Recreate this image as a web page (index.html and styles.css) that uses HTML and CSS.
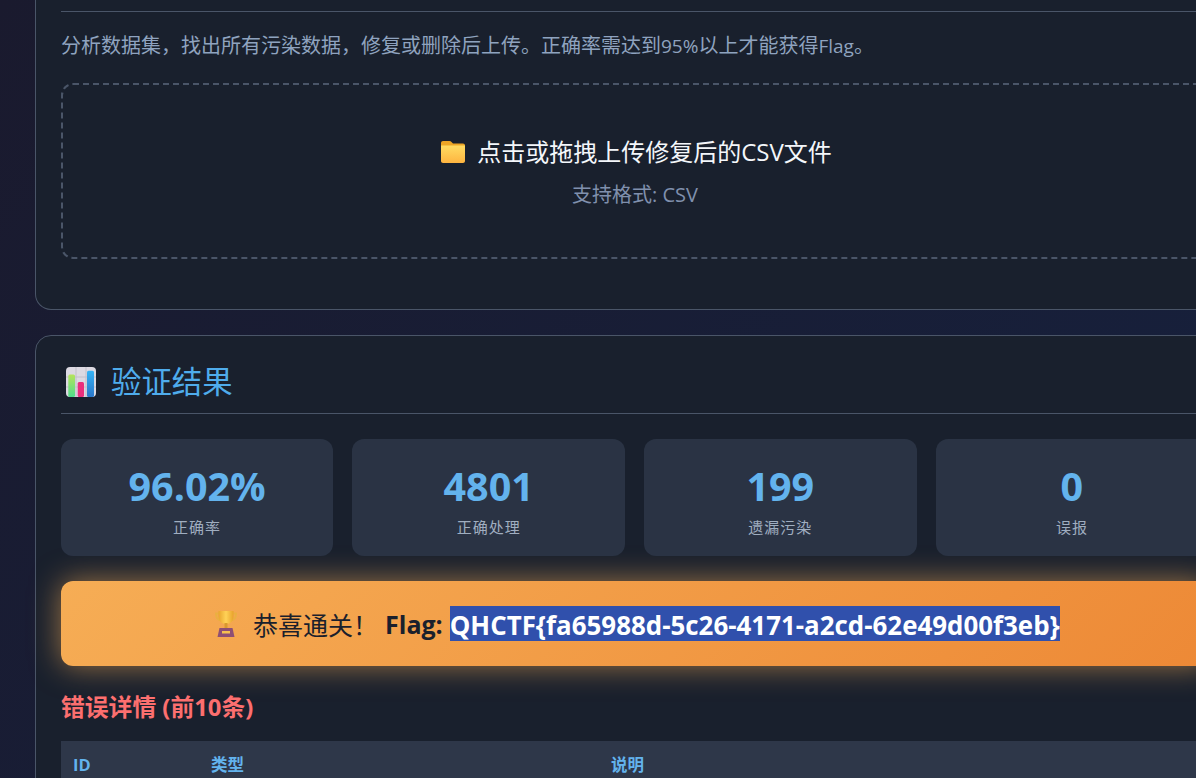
FILE: index.html
```html
<!DOCTYPE html>
<html lang="zh-CN">
<head>
<meta charset="utf-8">
<title>数据集验证</title>
<link rel="stylesheet" href="styles.css">
</head>
<body>
<main class="page">
  <section class="card card-clipped">
    <div class="rule-stub"></div>
    <p class="desc">分析数据集，找出所有污染数据，修复或删除后上传。正确率需达到<span class="latin">95%</span>以上才能获得<span class="latin">Flag</span>。</p>
    <div class="dropzone">
      <div class="drop-main">
        <svg class="icon-folder" viewBox="0 0 24 22" aria-hidden="true">
          <defs><linearGradient id="fold" x1="0" y1="0" x2="0" y2="1"><stop offset="0" stop-color="#ffdc62"/><stop offset="1" stop-color="#feb440"/></linearGradient></defs>
          <path d="M2 0h6.500c.8 0 1.400.3 2 .9L12 2.500h10c1.100 0 2 .9 2 2V8H0V2C0 .9.9 0 2 0z" fill="#eda526"/>
          <path d="M0 4.500h24V20c0 1.100-.9 2-2 2H2c-1.100 0-2-.9-2-2z" fill="url(#fold)"/>
        </svg>
        <span>点击或拖拽上传修复后的CSV文件</span>
      </div>
      <div class="drop-sub">支持格式: CSV</div>
    </div>
  </section>

  <section class="card">
    <h2 class="title">
      <svg class="icon-chart" viewBox="0 0 30 30" aria-hidden="true">
        <defs>
          <linearGradient id="barG" x1="0" y1="0" x2="0" y2="1"><stop offset="0" stop-color="#b5e35b"/><stop offset="1" stop-color="#4fdd8c"/></linearGradient>
          <linearGradient id="barB" x1="0" y1="0" x2="0" y2="1"><stop offset="0" stop-color="#35b4f6"/><stop offset="1" stop-color="#2a76c9"/></linearGradient>
        </defs>
        <rect width="30" height="30" rx="4" fill="#dcd9e2"/>
        <path d="M10 0v30M20 0v30M0 10h30M0 20h30" stroke="#c2bfca" stroke-width="1"/>
        <rect x="2.300" y="7.600" width="6.700" height="22.400" rx="1.500" fill="url(#barG)"/>
        <rect x="11.700" y="15" width="6.300" height="15" rx="1.500" fill="#ea2f7c"/>
        <rect x="21" y="3.700" width="7" height="26.300" rx="1.500" fill="url(#barB)"/>
      </svg>
      <span>验证结果</span>
    </h2>

    <div class="stats">
      <div class="stat"><div class="stat-value">96.02%</div><div class="stat-label">正确率</div></div>
      <div class="stat"><div class="stat-value">4801</div><div class="stat-label">正确处理</div></div>
      <div class="stat"><div class="stat-value">199</div><div class="stat-label">遗漏污染</div></div>
      <div class="stat"><div class="stat-value">0</div><div class="stat-label">误报</div></div>
    </div>

    <div class="banner">
      <svg class="icon-trophy" viewBox="0 0 22 26" aria-hidden="true">
        <defs><linearGradient id="cup" x1="0" y1="0" x2="1" y2="0"><stop offset="0" stop-color="#e9a52e"/><stop offset=".5" stop-color="#ffd257"/><stop offset="1" stop-color="#e8a22c"/></linearGradient></defs>
        <path d="M4 2.500H1C1 7 2.500 9 6 9.500M18 2.500h3C21 7 19.500 9 16 9.500" fill="none" stroke="#eab040" stroke-width="1.800"/>
        <path d="M3.500 0h15v5c0 5-3 8-7.500 8s-7.500-3-7.500-8z" fill="url(#cup)"/>
        <rect x="9.500" y="12" width="3" height="5" fill="#d99a2e"/>
        <path d="M4.500 17h13L19.500 26H2.500z" fill="#8e4f74"/>
        <rect x="7" y="20" width="8" height="2.500" fill="#f6c14f"/>
      </svg>
      <span class="banner-zh">恭喜通关！</span>
      <strong class="banner-flag">Flag:</strong>
      <strong class="flag-selected">QHCTF{fa65988d-5c26-4171-a2cd-62e49d00f3eb}</strong>
    </div>

    <h3 class="errors-title">错误详情 (前10条)</h3>

    <table class="errors">
      <thead>
        <tr><th class="col-id">ID</th><th class="col-type">类型</th><th>说明</th></tr>
      </thead>
    </table>
  </section>
</main>
</body>
</html>
```

FILE: styles.css
```css
* { box-sizing: border-box; }

html, body {
  margin: 0;
  height: 100%;
  overflow: hidden;
}

body {
  background: linear-gradient(135deg, #1a1a2e 0%, #16213e 100%);
  font-family: "Open Sans", "Noto Sans CJK SC", sans-serif;
  color: #e2e8f0;
}

.page {
  width: 1240px;
  padding-left: 35px;
}

.card {
  width: 1200px;
  background: #19202d;
  border: 1px solid #4a5568;
  border-radius: 16px;
  padding: 24px 25px 50px;
  margin-bottom: 25px;
}

.card-clipped {
  border-top: 0;
  border-radius: 0 0 16px 16px;
  padding-top: 0;
  height: 310px;
}

.rule-stub {
  height: 12px;
  border-bottom: 1px solid #4a5568;
}

.desc {
  margin: 21px 0 24px;
  font-size: 20px;
  line-height: 26px;
  color: #8fa3bf;
}

.latin { font-size: 19px; }

.dropzone {
  height: 176px;
  padding-top: 3px;
  border: 2px dashed #4a5568;
  border-radius: 12px;
  display: flex;
  flex-direction: column;
  align-items: center;
  justify-content: center;
  gap: 15px;
}

.drop-main {
  display: flex;
  align-items: center;
  gap: 12px;
  margin-left: 3px;
  font-size: 24px;
  line-height: 30px;
  color: #f4f7fb;
}

.icon-folder { width: 24px; height: 22px; }

.drop-sub {
  font-size: 20px;
  line-height: 26px;
  color: #8090ad;
}

.title {
  display: flex;
  align-items: center;
  gap: 15px;
  margin: 0;
  height: 54px;
  padding-bottom: 9px;
  border-bottom: 1px solid #4a5568;
  font-size: 30.400px;
  line-height: 44px;
  font-weight: 400;
  color: #4facec;
}

.icon-chart { width: 30px; height: 30px; margin-left: 5px; flex: none; }

.stats {
  display: grid;
  grid-template-columns: repeat(4, 272.600px);
  gap: 19px;
  margin: 25px 0 0 -0.200px;
  width: 1148.800px;
}

.stat {
  height: 117px;
  background: #2a3344;
  border-radius: 12px;
  padding-top: 23px;
  text-align: center;
}

.stat-value {
  font-size: 39.500px;
  line-height: 48px;
  font-weight: 700;
  color: #63b3ed;
}

.stat-label {
  margin-top: 7px;
  font-size: 15px;
  line-height: 20px;
  letter-spacing: 1px;
  color: #a0aec0;
}

.banner {
  display: flex;
  align-items: center;
  justify-content: center;
  width: 1148.800px;
  height: 85px;
  margin-top: 25px;
  padding-left: 4px;
  border-radius: 12px;
  background: linear-gradient(135deg, #f6ad55, #ed8936);
  box-shadow: 0 0 30px rgba(246, 173, 85, 0.6);
  color: #1a202c;
}

.icon-trophy { width: 22px; height: 26px; margin-right: 16px; flex: none; }

.banner-zh { font-size: 25px; font-weight: 400; margin-right: 7px; }

.banner-flag { font-size: 25px; font-weight: 700; margin-right: 7px; }

.flag-selected {
  padding-top: 4px;
  background: #3050ac;
  color: #fff;
  font-size: 25.900px;
  font-weight: 700;
  line-height: 31px;
}

.errors-title {
  margin: 26px 0 19px;
  font-size: 23.800px;
  line-height: 30px;
  font-weight: 700;
  color: #fc6f6f;
}

.errors {
  width: 1148.800px;
  border-collapse: collapse;
  table-layout: fixed;
}

.errors th {
  height: 48px;
  padding: 0 12px 2px;
  background: #2e3749;
  color: #63b3ed;
  font-size: 16.500px;
  font-weight: 700;
  text-align: left;
}

.col-id { width: 138px; }
.col-type { width: 400px; }
```
